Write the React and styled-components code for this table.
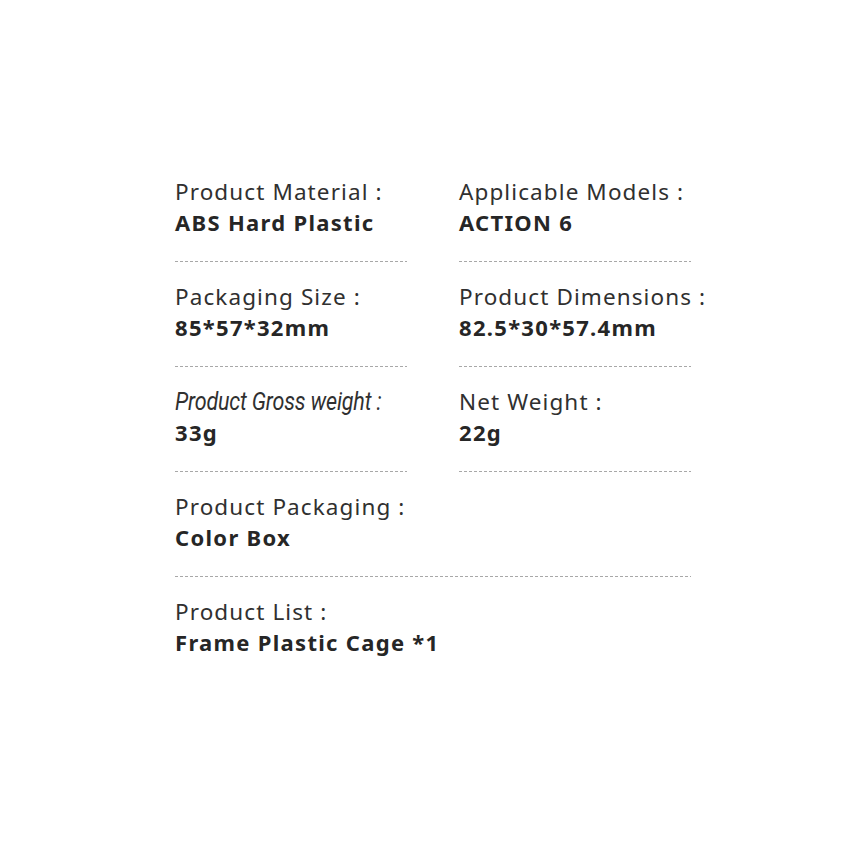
import React from 'react'
import styled, { createGlobalStyle } from 'styled-components'

const GlobalStyle = createGlobalStyle`
  body {
    margin: 0;
    background: #fff;
    font-family: "Noto Sans", "Open Sans", sans-serif;
  }
`

const Page = styled.div`
  width: 850px;
  height: 850px;
  box-sizing: border-box;
  padding: 176px 0 0 175px;
`

const Grid = styled.div`
  display: grid;
  grid-template-columns: 232px 232px;
  column-gap: 52px;
`

const Cell = styled.div`
  grid-column: ${props => props.wide ? '1 / span 2' : 'auto'};
  height: ${props => props.last ? 'auto' : '105px'};
  box-sizing: border-box;
  display: flex;
  flex-direction: column;
  align-items: flex-start;
`

const Label = styled.div`
  font-size: 22.5px;
  line-height: 32px;
  color: #303030;
  letter-spacing: 1.1px;
  white-space: nowrap;
`

const CondensedLabel = styled.div`
  font-family: Roboto, sans-serif;
  font-style: italic;
  font-size: 25px;
  line-height: 32px;
  color: #303030;
  letter-spacing: -0.2px;
  white-space: nowrap;
  transform: scaleX(0.86);
  transform-origin: left center;
`

const Value = styled.div`
  font-size: 22px;
  line-height: 30px;
  font-weight: 700;
  color: #262626;
  letter-spacing: 1.3px;
  white-space: nowrap;
  margin-top: -1px;
`

const Divider = styled.div`
  align-self: stretch;
  margin-top: auto;
  margin-bottom: 19px;
  height: 1px;
  background-image: repeating-linear-gradient(to right, #a8a8a8 0 3px, transparent 3px 5px);
`

const Spec = ({ label, value, wide, last, condensed }) => (
  <Cell wide={wide} last={last}>
    {condensed ? <CondensedLabel>{label}</CondensedLabel> : <Label>{label}</Label>}
    <Value>{value}</Value>
    {!last && <Divider />}
  </Cell>
)

export default function App() {
  return (
    <>
      <GlobalStyle />
      <Page>
        <Grid>
          <Spec label="Product Material :" value="ABS Hard Plastic" />
          <Spec label="Applicable Models :" value="ACTION 6" />
          <Spec label="Packaging Size :" value="85*57*32mm" />
          <Spec label="Product Dimensions :" value="82.5*30*57.4mm" />
          <Spec label="Product Gross weight :" value="33g" condensed />
          <Spec label="Net Weight :" value="22g" />
          <Spec label="Product Packaging :" value="Color Box" wide />
          <Spec label="Product List :" value="Frame Plastic Cage *1" wide last />
        </Grid>
      </Page>
    </>
  )
}
